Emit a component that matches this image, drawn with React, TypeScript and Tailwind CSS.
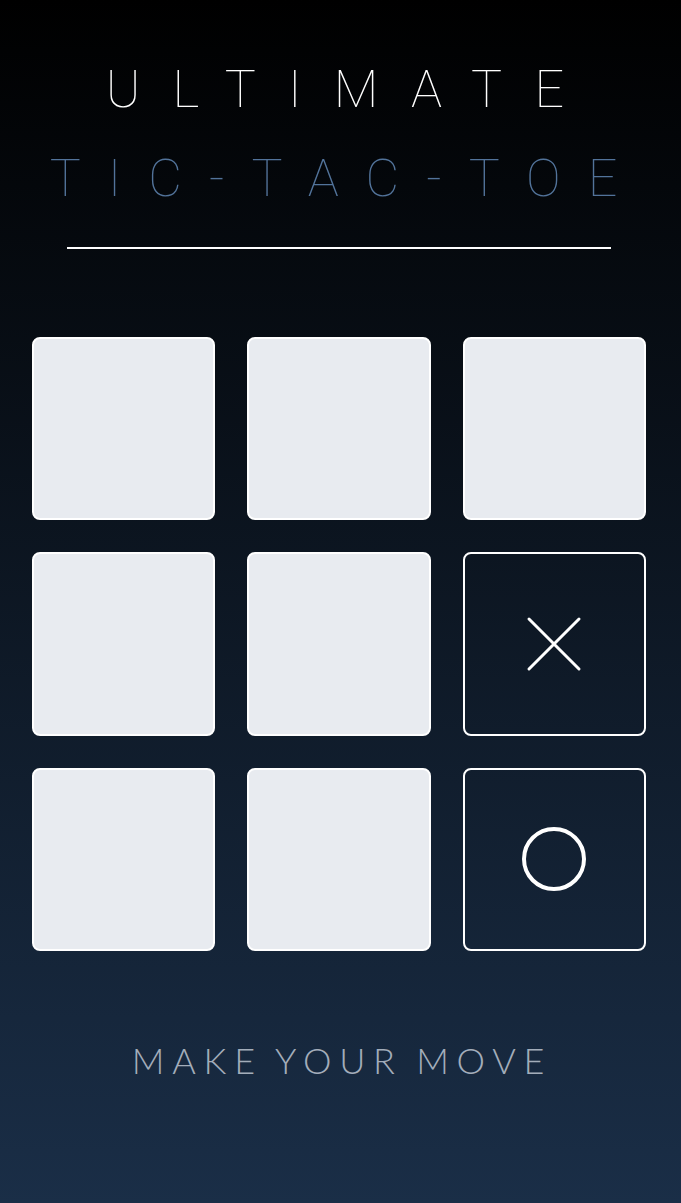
const board: ("" | "X" | "O")[] = ["", "", "", "", "", "X", "", "", "O"];

function Mark({ value }: { value: "X" | "O" }) {
  if (value === "X") {
    return (
      <svg width="56" height="56" viewBox="0 0 56 56" fill="none">
        <path d="M3 3 L53 53 M53 3 L3 53" stroke="white" strokeWidth="3" strokeLinecap="round" />
      </svg>
    );
  }
  return (
    <svg width="68" height="68" viewBox="0 0 68 68" fill="none">
      <circle cx="34" cy="34" r="30" stroke="white" strokeWidth="4" />
    </svg>
  );
}

export default function App() {
  return (
    <div className="min-h-[1203px] w-full bg-[linear-gradient(to_bottom,#000000,#1a2e47)]">
      <div className="w-[678px] flex flex-col items-center">
        {/* Title */}
        <h1
          className="mt-[64px] pl-[24px] text-[52px] leading-none font-thin tracking-[0.62em] text-white"
          style={{ fontFamily: "Roboto, sans-serif" }}
        >
          ULTIMATE
        </h1>
        <h2
          className="mt-[37px] pl-[16px] text-[52px] leading-none font-thin tracking-[0.52em] text-[#52739a]"
          style={{ fontFamily: "Roboto, sans-serif" }}
        >
          TIC-TAC-TOE
        </h2>
        <div className="mt-[42px] h-[2px] w-[544px] bg-white" />

        {/* Board */}
        <div className="mt-[88px] grid w-[614px] grid-cols-3 gap-8">
          {board.map((cell, i) => (
            <button
              key={i}
              className={
                cell
                  ? "aspect-square rounded-lg border-2 border-white bg-transparent flex items-center justify-center"
                  : "aspect-square rounded-lg border-2 border-white bg-[#e8ebf0]"
              }
            >
              {cell && <Mark value={cell} />}
            </button>
          ))}
        </div>

        {/* Status */}
        <p
          className="mt-[91px] pl-[6px] text-[36px] leading-none font-light tracking-[0.215em] [word-spacing:-4px] text-[#a3adba]"
          style={{ fontFamily: "Lato, sans-serif" }}
        >
          MAKE YOUR MOVE
        </p>
      </div>
    </div>
  );
}
